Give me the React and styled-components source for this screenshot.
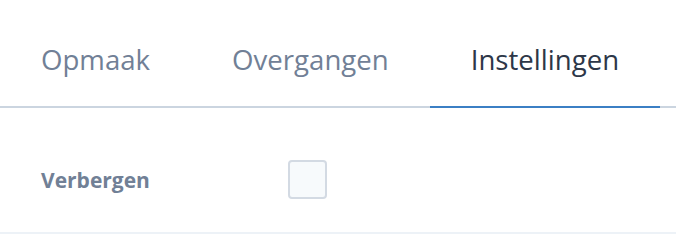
import styled, { createGlobalStyle } from "styled-components";

const GlobalStyle = createGlobalStyle`
  body {
    margin: 0;
    background: #ffffff;
    font-family: "Open Sans", "Noto Sans", sans-serif;
  }
`;

const TabBar = styled.div`
  display: flex;
  border-bottom: 2px solid #cbd5e0;
`;

const Tab = styled.button`
  font-family: inherit;
  font-size: 27.6px;
  line-height: 36px;
  background: none;
  border: none;
  padding: 41px 41px 29px;
  margin-bottom: -2px;
  border-bottom: 2px solid ${({ active }) => (active ? "#3b7fc4" : "transparent")};
  color: ${({ active }) => (active ? "#2d3748" : "#718096")};
  cursor: pointer;
`;

const Row = styled.div`
  display: flex;
  align-items: center;
  padding: 52px 41px 33px;
  border-bottom: 2px solid #edf2f7;
`;

const Label = styled.label`
  width: 247px;
  font-size: 21px;
  font-weight: 700;
  color: #718096;
`;

const Checkbox = styled.span`
  display: block;
  width: 39px;
  height: 39px;
  box-sizing: border-box;
  border: 2px solid #d3dae3;
  border-radius: 4px;
  background: #f7fafc;
`;

const tabs = ["Opmaak", "Overgangen", "Instellingen"];

const App = () => {
  return (
    <>
      <GlobalStyle />
      <TabBar>
        {tabs.map((t) => (
          <Tab key={t} active={t === "Instellingen"}>
            {t}
          </Tab>
        ))}
      </TabBar>
      <Row>
        <Label>Verbergen</Label>
        <Checkbox />
      </Row>
    </>
  );
};

export default App;
